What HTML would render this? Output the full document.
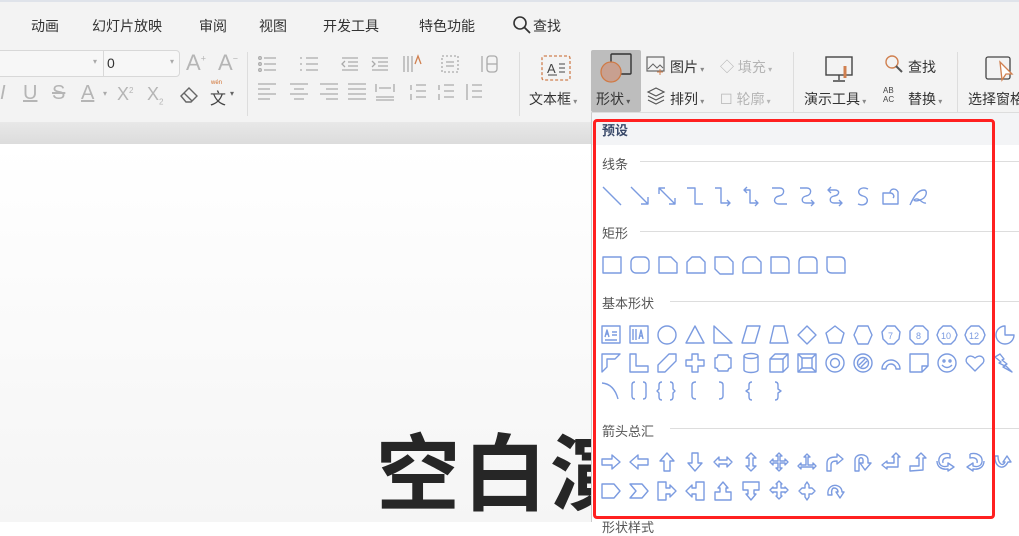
<!DOCTYPE html>
<html><head><meta charset="utf-8"><style>
*{margin:0;padding:0;box-sizing:border-box}
body{width:1019px;height:522px;overflow:hidden;position:relative;background:#fff;font-family:"Liberation Sans","Noto Sans CJK SC",sans-serif;color:#333}
.a{position:absolute;white-space:nowrap}
.t{font-size:14px;color:#333}
.g{color:#b5b5b5}
.lab{font-size:13px;color:#555}
</style></head><body>
<div class="a" style="left:0;top:0;width:1019px;height:48px;background:#f3f3f3;border-top:2px solid #dfe3ea"></div>
<div class="a t" style="left:31px;top:16px">动画</div>
<div class="a t" style="left:92px;top:16px">幻灯片放映</div>
<div class="a t" style="left:199px;top:16px">审阅</div>
<div class="a t" style="left:259px;top:16px">视图</div>
<div class="a t" style="left:323px;top:16px">开发工具</div>
<div class="a t" style="left:419px;top:16px">特色功能</div>
<svg class="a" style="left:512px;top:15px" width="20" height="20"><circle cx="8" cy="8" r="6" fill="none" stroke="#333" stroke-width="1.6"/><path d="M12.5 12.5L18 18" stroke="#333" stroke-width="1.8"/></svg>
<div class="a t" style="left:533px;top:16px">查找</div>
<div class="a" style="left:0;top:48px;width:1019px;height:74px;background:#f3f3f3"></div>
<div class="a" style="left:0;top:122px;width:1019px;height:22px;background:linear-gradient(#e8e8e8,#dcdcdc)"></div>
<div class="a" style="left:0;top:144px;width:1019px;height:378px;background:linear-gradient(#ffffff,#f5f5f5)"></div>
<div class="a" style="left:-5px;top:50px;width:185px;height:27px;border:1px solid #d8d8d8;border-radius:4px;background:#f7f7f7"></div>
<div class="a" style="left:103px;top:51px;width:1px;height:25px;background:#d8d8d8"></div>
<div class="a" style="left:107px;top:55px;font-size:14px">0</div>
<div class="a" style="left:93px;top:57px;font-size:8px;color:#aaa">▾</div>
<div class="a" style="left:170px;top:57px;font-size:8px;color:#aaa">▾</div>
<div class="a g" style="left:186px;top:50px;font-size:22px">A<sup style="font-size:9px">+</sup></div>
<div class="a g" style="left:218px;top:50px;font-size:22px">A<sup style="font-size:9px">−</sup></div>
<div class="a g" style="left:0;top:82px;font-size:20px;font-style:italic">I</div>
<div class="a g" style="left:23px;top:82px;font-size:20px;text-decoration:underline">U</div>
<div class="a g" style="left:52px;top:82px;font-size:20px;text-decoration:line-through">S</div>
<div class="a g" style="left:81px;top:82px;font-size:20px;text-decoration:underline">A</div>
<div class="a" style="left:103px;top:89px;font-size:8px;color:#aaa">▾</div>
<div class="a g" style="left:117px;top:84px;font-size:18px">X<sup style="font-size:8px">2</sup></div>
<div class="a g" style="left:147px;top:84px;font-size:18px">X<sub style="font-size:8px">2</sub></div>
<svg class="a" style="left:178px;top:84px" width="22" height="20"><path d="M3 12L11 4L19 12L13 18H8Z M6 9L14 17" fill="none" stroke="#666" stroke-width="1.4"/></svg>
<div class="a" style="left:210px;top:85px;font-size:16px;color:#444">文</div>
<div class="a" style="left:211px;top:80px;font-size:6px;color:#d07030">wén</div>
<div class="a" style="left:230px;top:89px;font-size:8px;color:#666">▾</div>
<div class="a" style="left:247px;top:52px;width:1px;height:64px;background:#ddd"></div>
<svg class="a" style="left:256px;top:52px" width="260" height="50" stroke="#aaa" stroke-width="1.3" fill="none">
<g><path d="M8 6H20M8 12H20M8 18H20"/><circle cx="4" cy="6" r="1.3"/><circle cx="4" cy="12" r="1.3"/><circle cx="4" cy="18" r="1.3"/></g>
<g transform="translate(42,0)"><path d="M8 6H20M8 12H20M8 18H20M2 6H4M2 12H4M2 18H4"/></g>
<g transform="translate(84,0)"><path d="M2 6H18M8 10H18M8 14H18M2 18H18M5 9L2 12L5 15"/></g>
<g transform="translate(114,0)"><path d="M2 6H18M8 10H18M8 14H18M2 18H18M2 9L5 12L2 15"/></g>
<g transform="translate(146,0)"><path d="M2 4V20M6 4V20M10 4V20"/><path d="M13 12L16 4L19 12" stroke="#d08050"/></g>
<g transform="translate(184,0)"><rect x="2" y="4" width="16" height="16" stroke-dasharray="2 2"/><path d="M6 10H14M6 14H14"/></g>
<g transform="translate(224,0)"><path d="M2 4V20"/><rect x="7" y="4" width="10" height="16" rx="3"/><path d="M7 12H17"/></g>
<g transform="translate(0,30)"><path d="M2 2H20M2 7H14M2 12H20M2 17H14"/></g>
<g transform="translate(32,30)"><path d="M2 2H20M6 7H16M2 12H20M6 17H16"/></g>
<g transform="translate(62,30)"><path d="M2 2H20M8 7H20M2 12H20M8 17H20"/></g>
<g transform="translate(90,30)"><path d="M2 2H20M2 7H20M2 12H20M2 17H20"/></g>
<g transform="translate(118,30)"><path d="M2 2V10M20 2V10M5 6H17M2 15H20M2 18H20"/></g>
<g transform="translate(152,30)"><path d="M8 3H18M8 9H18M8 15H18M3 3V8M3 12V18"/></g>
<g transform="translate(180,30)"><path d="M8 3H18M8 9H18M8 15H18M3 3V8M3 12V18"/></g>
<g transform="translate(208,30)"><path d="M8 3H18M8 9H18M8 15H18M3 2V18"/></g>
</svg>
<div class="a" style="left:519px;top:52px;width:1px;height:64px;background:#ddd"></div>
<svg class="a" style="left:540px;top:54px" width="32" height="28"><rect x="2" y="2" width="28" height="24" rx="2" fill="none" stroke="#d08050" stroke-width="1.3" stroke-dasharray="3 2"/><text x="7" y="19" font-size="13" fill="#444" font-family="Liberation Sans">A</text><path d="M19 10H25M19 14H25M19 18H25M8 21H17" stroke="#444"/></svg>
<div class="a t" style="left:529px;top:89px">文本框<span style="font-size:8px;color:#888"> ▾</span></div>
<div class="a" style="left:591px;top:50px;width:50px;height:62px;background:#bdbdbd;border-radius:2px"></div>
<svg class="a" style="left:598px;top:52px" width="36" height="34"><rect x="13" y="2" width="20" height="20" rx="1" fill="none" stroke="#333" stroke-width="1.4"/><circle cx="13" cy="20" r="10" fill="#c8a090" stroke="#d07a45" stroke-width="1.3"/></svg>
<div class="a t" style="left:596px;top:89px">形状<span style="font-size:8px;color:#555"> ▾</span></div>
<svg class="a" style="left:646px;top:55px" width="20" height="20"><rect x="1" y="2" width="17" height="14" fill="none" stroke="#666" stroke-width="1.2"/><path d="M2 14L7 9L11 13L14 10L17 13" stroke="#666" fill="none"/><path d="M14 14V20M11 17H17" stroke="#d08050"/></svg>
<div class="a t" style="left:670px;top:57px">图片<span style="font-size:8px;color:#888"> ▾</span></div>
<div class="a t g" style="left:720px;top:57px">◇ 填充<span style="font-size:8px"> ▾</span></div>
<svg class="a" style="left:646px;top:86px" width="20" height="20" fill="none" stroke="#555" stroke-width="1.2"><path d="M2 6L10 2L18 6L10 10Z M2 10L10 14L18 10 M2 14L10 18L18 14"/></svg>
<div class="a t" style="left:670px;top:89px">排列<span style="font-size:8px;color:#888"> ▾</span></div>
<div class="a t g" style="left:720px;top:89px">☐ 轮廓<span style="font-size:8px"> ▾</span></div>
<div class="a" style="left:793px;top:52px;width:1px;height:64px;background:#ddd"></div>
<svg class="a" style="left:824px;top:54px" width="30" height="30" fill="none" stroke="#444" stroke-width="1.4"><rect x="2" y="3" width="26" height="18"/><path d="M15 21V26M9 27H21"/><path d="M21 12V24" stroke="#d08050" stroke-width="3"/></svg>
<div class="a t" style="left:804px;top:89px">演示工具<span style="font-size:8px;color:#888"> ▾</span></div>
<svg class="a" style="left:884px;top:54px" width="20" height="20"><circle cx="8" cy="8" r="6" fill="none" stroke="#d08050" stroke-width="1.4"/><path d="M12 12L18 18" stroke="#555" stroke-width="2"/></svg>
<div class="a t" style="left:908px;top:57px">查找</div>
<div class="a" style="left:883px;top:86px;font-size:8px;line-height:9px;color:#444">AB<br>AC</div>
<div class="a t" style="left:908px;top:89px">替换<span style="font-size:8px;color:#888"> ▾</span></div>
<div class="a" style="left:957px;top:52px;width:1px;height:64px;background:#ddd"></div>
<svg class="a" style="left:984px;top:54px" width="32" height="30"><rect x="2" y="3" width="24" height="22" rx="2" fill="none" stroke="#444" stroke-width="1.3"/><path d="M16 8L28 20L22 20L18 26Z" fill="#fff" stroke="#d08050" stroke-width="1.3"/></svg>
<div class="a t" style="left:968px;top:89px">选择窗格</div>
<div class="a" style="left:376px;top:408px;font-size:84px;font-weight:bold;color:#262626;letter-spacing:3px;font-family:'Noto Sans CJK SC',sans-serif">空白演</div>
<div class="a" style="left:591px;top:112px;width:428px;height:410px;background:#fff;border-left:1px solid #ccc;border-top:1px solid #ddd"></div>
<div class="a" style="left:592px;top:113px;width:427px;height:32px;background:#f3f4f6"></div>
<div class="a" style="left:602px;top:120px;font-size:13px;font-weight:bold;color:#3a4a6a">预设</div>
<div class="a lab" style="left:602px;top:154px">线条</div><div class="a" style="left:640px;top:161px;width:379px;height:1px;background:#ddd"></div>
<div class="a lab" style="left:602px;top:223px">矩形</div><div class="a" style="left:640px;top:231px;width:379px;height:1px;background:#ddd"></div>
<div class="a lab" style="left:602px;top:293px">基本形状</div><div class="a" style="left:670px;top:301px;width:349px;height:1px;background:#ddd"></div>
<div class="a lab" style="left:602px;top:421px">箭头总汇</div><div class="a" style="left:670px;top:428px;width:349px;height:1px;background:#ddd"></div>
<svg class="a" style="left:0;top:0" width="1019" height="522" fill="none" stroke="#7b9be0" stroke-width="1.4" stroke-linejoin="round">
<g transform="translate(602,186)"><path d="M1 1L19 19"/></g>
<g transform="translate(630,186)"><path d="M1 1L18 18M18 11V18H11"/></g>
<g transform="translate(657,186)"><path d="M2 2L18 18M2 8V2H8M18 12V18H12"/></g>
<g transform="translate(685,186)"><path d="M2 2H10V18H18"/></g>
<g transform="translate(713,186)"><path d="M2 2H8V17H17M14 14L17 17L14 20"/></g>
<g transform="translate(741,186)"><path d="M3 4H9V17H17M6 1L3 4L6 7M14 14L17 17L14 20"/></g>
<g transform="translate(769,186)"><path d="M3 2H11C16 2 16 9 10 10C4 11 4 18 10 18H18"/></g>
<g transform="translate(797,186)"><path d="M3 2H10C15 2 15 9 9 10C4 11 4 17 9 17H17M14 14L17 17L14 20"/></g>
<g transform="translate(825,186)"><path d="M3 4H10C15 4 15 9 9 10C4 11 4 17 9 17H17M6 1L3 4L6 7M14 14L17 17L14 20"/></g>
<g transform="translate(853,186)"><path d="M15 3C6 -1 2 8 10 10C18 12 14 22 5 18"/></g>
<g transform="translate(881,186)"><path d="M2 18V7H9C9 2 15 2 17 6V18Z M9 7C12 7 14 10 12 12"/></g>
<g transform="translate(908,186)"><path d="M2 19C6 10 10 4 16 4C20 4 19 12 12 14C7 16 4 14 8 13C12 12 14 18 18 17"/></g>
<g transform="translate(602,256)"><rect x="1" y="1" width="18" height="16"/></g>
<g transform="translate(630,256)"><rect x="1" y="1" width="18" height="16" rx="5"/></g>
<g transform="translate(658,256)"><path d="M1 1H13L19 7V17H1Z"/></g>
<g transform="translate(686,256)"><path d="M6 1H14L19 6V17H1V6Z"/></g>
<g transform="translate(714,256)"><path d="M1 1H14L19 6V18H6L1 13Z"/></g>
<g transform="translate(742,256)"><path d="M7 1H14L19 6V17H1V7C1 4 4 1 7 1Z"/></g>
<g transform="translate(770,256)"><path d="M1 1H14Q19 1 19 6V17H1Z"/></g>
<g transform="translate(798,256)"><path d="M6 1H14Q19 1 19 6V17H1V6Q1 1 6 1Z"/></g>
<g transform="translate(826,256)"><path d="M1 1H14Q19 1 19 6V17H6Q1 17 1 12Z"/></g>
<g transform="translate(601,325)"><rect x="1" y="1" width="18" height="17"/><path d="M4 12L6 5L8 12M5 9H7M11 7H16M11 10H16M4 15H16"/></g>
<g transform="translate(629,325)"><rect x="1" y="1" width="18" height="17"/><path d="M4 4V15M7 4V15M10 14L12 5L14 14M11 11H13"/></g>
<g transform="translate(657,325)"><circle cx="10" cy="10" r="9"/></g>
<g transform="translate(685,325)"><path d="M10 1L19 18H1Z"/></g>
<g transform="translate(713,325)"><path d="M1 1L19 18H1Z"/></g>
<g transform="translate(741,325)"><path d="M6 1H19L14 18H1Z"/></g>
<g transform="translate(769,325)"><path d="M5 1H15L19 18H1Z"/></g>
<g transform="translate(797,325)"><path d="M10 1L19 10L10 19L1 10Z"/></g>
<g transform="translate(825,325)"><path d="M10 1L19 8L16 18H4L1 8Z"/></g>
<g transform="translate(853,325)"><path d="M5 1H15L19 10L15 19H5L1 10Z"/></g>
<g transform="translate(881,325)"><path d="M6 1H14L19 7L18 14L13 19H7L2 14L1 7Z"/><text x="7" y="14" font-size="9" fill="#7b9be0" stroke="none">7</text></g>
<g transform="translate(909,325)"><path d="M6 1H14L19 6V14L14 19H6L1 14V6Z"/><text x="7" y="14" font-size="9" fill="#7b9be0" stroke="none">8</text></g>
<g transform="translate(937,325)"><path d="M6 1H14L18 5L20 10L18 15L14 19H6L2 15L0 10L2 5Z"/><text x="4" y="14" font-size="9" fill="#7b9be0" stroke="none">10</text></g>
<g transform="translate(965,325)"><path d="M6 1H14L18 5L20 10L18 15L14 19H6L2 15L0 10L2 5Z"/><text x="4" y="14" font-size="9" fill="#7b9be0" stroke="none">12</text></g>
<g transform="translate(995,325)"><path d="M10 10H19A9 9 0 1 1 10 1Z"/></g>
<g transform="translate(601,353)"><path d="M1 19V1H19L14 6H6V14Z"/></g>
<g transform="translate(629,353)"><path d="M1 1H7V13H19V19H1Z"/></g>
<g transform="translate(657,353)"><path d="M1 19V12L12 1H19V8L8 19Z"/></g>
<g transform="translate(685,353)"><path d="M7 1H13V7H19V13H13V19H7V13H1V7H7Z"/></g>
<g transform="translate(713,353)"><path d="M5 2H15Q15 5 18 5V15Q15 15 15 18H5Q5 15 2 15V5Q5 5 5 2Z"/></g>
<g transform="translate(743,353)"><ellipse cx="8" cy="3" rx="7" ry="2.5"/><path d="M1 3V17A7 2.5 0 0 0 15 17V3"/></g>
<g transform="translate(769,353)"><path d="M1 6L6 1H19V14L14 19H1Z M1 6H14V19M14 6L19 1"/></g>
<g transform="translate(797,353)"><rect x="1" y="1" width="18" height="18"/><rect x="5" y="5" width="10" height="10"/><path d="M1 1L5 5M19 1L15 5M1 19L5 15M19 19L15 15"/></g>
<g transform="translate(825,353)"><circle cx="10" cy="10" r="9"/><circle cx="10" cy="10" r="4.5"/></g>
<g transform="translate(853,353)"><circle cx="10" cy="10" r="9"/><circle cx="10" cy="10" r="5.5"/><path d="M6 12L12 6M8 14L14 8"/></g>
<g transform="translate(881,353)"><path d="M1 16A9 9 0 0 1 19 16H15A5 5 0 0 0 5 16Z"/></g>
<g transform="translate(909,353)"><path d="M1 1H19V13L13 19H1Z M13 19V13H19"/></g>
<g transform="translate(937,353)"><circle cx="10" cy="10" r="9"/><circle cx="7" cy="8" r="1"/><circle cx="13" cy="8" r="1"/><path d="M5 12Q10 17 15 12"/></g>
<g transform="translate(965,353)"><path d="M10 18L2 10C-1 6 4 0 10 5C16 0 21 6 18 10Z"/></g>
<g transform="translate(994,353)"><path d="M1 4L6 1L10 6L8 7L13 11L11 12L18 19L9 14L11 13L5 10L7 9Z"/></g>
<g transform="translate(601,381)"><path d="M1 2Q13 3 17 18"/></g>
<g transform="translate(631,381)"><path d="M4 1Q1 1 1 4V15Q1 18 4 18M12 1Q15 1 15 4V15Q15 18 12 18"/></g>
<g transform="translate(657,381)"><path d="M5 1Q2 1 2 4V8L0 10L2 12V16Q2 19 5 19M13 1Q16 1 16 4V8L18 10L16 12V16Q16 19 13 19"/></g>
<g transform="translate(690,381)"><path d="M6 1Q2 1 2 4V15Q2 18 6 18"/></g>
<g transform="translate(717,381)"><path d="M2 1Q6 1 6 4V15Q6 18 2 18"/></g>
<g transform="translate(745,381)"><path d="M7 1Q4 1 4 4V8L1 10L4 12V16Q4 19 7 19"/></g>
<g transform="translate(773,381)"><path d="M2 1Q5 1 5 4V8L8 10L5 12V16Q5 19 2 19"/></g>
<g transform="translate(601,452)"><path d="M1 7H11V3L19 10L11 17V13H1Z"/></g>
<g transform="translate(629,452)"><path d="M19 7H9V3L1 10L9 17V13H19Z"/></g>
<g transform="translate(657,452)"><path d="M7 19V9H3L10 1L17 9H13V19Z"/></g>
<g transform="translate(685,452)"><path d="M7 1V11H3L10 19L17 11H13V1Z"/></g>
<g transform="translate(713,452)"><path d="M1 10L6 5V8H14V5L19 10L14 15V12H6V15Z"/></g>
<g transform="translate(741,452)"><path d="M10 1L15 6H12V14H15L10 19L5 14H8V6H5Z"/></g>
<g transform="translate(769,452)"><path d="M10 1L13 4H11V9H16V7L19 10L16 13V11H11V16H13L10 19L7 16H9V11H4V13L1 10L4 7V9H9V4H7Z"/></g>
<g transform="translate(797,452)"><path d="M10 2L13 5H11V13H16V11L19 14L16 17V15H4V17L1 14L4 11V13H9V5H7Z"/></g>
<g transform="translate(825,452)"><path d="M2 19V11C2 6 6 5 12 5V2L18 7L12 12V9C8 9 6 10 6 13V19Z"/></g>
<g transform="translate(853,452)"><path d="M2 19V8C2 1 15 1 15 8V11H18L12 18L7 11H10V8C10 5 6 5 6 8V19Z"/></g>
<g transform="translate(881,452)"><path d="M15 1L19 5H17V15H6V17L1 13L6 9V11H13V5H11Z"/></g>
<g transform="translate(909,452)"><path d="M1 19V14H10V6H7L12 1L17 6H14V18Z"/></g>
<g transform="translate(937,452)"><path d="M13 2C6 0 1 4 2 10C3 15 8 15 11 14V11L17 15L11 19V17C5 18 0 15 0 9 M13 2V6C8 5 5 7 6 11"/></g>
<g transform="translate(965,452)"><path d="M5 2C12 0 18 4 17 10C16 15 11 15 8 14V11L2 15L8 19V17C14 18 19 15 19 9 M5 2V6C10 5 13 7 12 11"/></g>
<g transform="translate(993,452)"><path d="M2 4C1 14 10 20 15 10H18L14 4L10 10H12C10 15 5 12 5 4Z"/></g>
<g transform="translate(601,481)"><path d="M1 3H13L19 10L13 17H1Z"/></g>
<g transform="translate(629,481)"><path d="M1 3H13L19 10L13 17H1L7 10Z"/></g>
<g transform="translate(657,481)"><path d="M1 1H9V7H13V4L19 10L13 16V13H9V19H1Z"/></g>
<g transform="translate(685,481)"><path d="M19 1H11V7H7V4L1 10L7 16V13H11V19H19Z"/></g>
<g transform="translate(713,481)"><path d="M2 19V11H7V7H5L10 1L15 7H13V11H18V19Z"/></g>
<g transform="translate(741,481)"><path d="M2 1V9H7V13H5L10 19L15 13H13V9H18V1Z"/></g>
<g transform="translate(769,481)"><path d="M7 3L10 0L13 3H12V7H16V6L19 9L16 12V11H12V15H13L10 18L7 15H8V11H4V12L1 9L4 6V7H8V3Z"/></g>
<g transform="translate(797,481)"><path d="M8 4L10 1L12 4V7H15L18 10L15 13H12V16L10 19L8 16V13H5L2 10L5 7H8Z"/></g>
<g transform="translate(825,481)"><path d="M3 14C2 6 8 3 13 5C16 6 17 9 17 11H19L15 17L11 11H13C13 8 11 7 9 7C7 7 6 10 7 14Z"/></g>
</svg>
<div class="a lab" style="left:602px;top:517px">形状样式</div>
<div class="a" style="left:593px;top:119px;width:402px;height:400px;border:3px solid #ff2020;border-radius:4px"></div>
</body></html>
